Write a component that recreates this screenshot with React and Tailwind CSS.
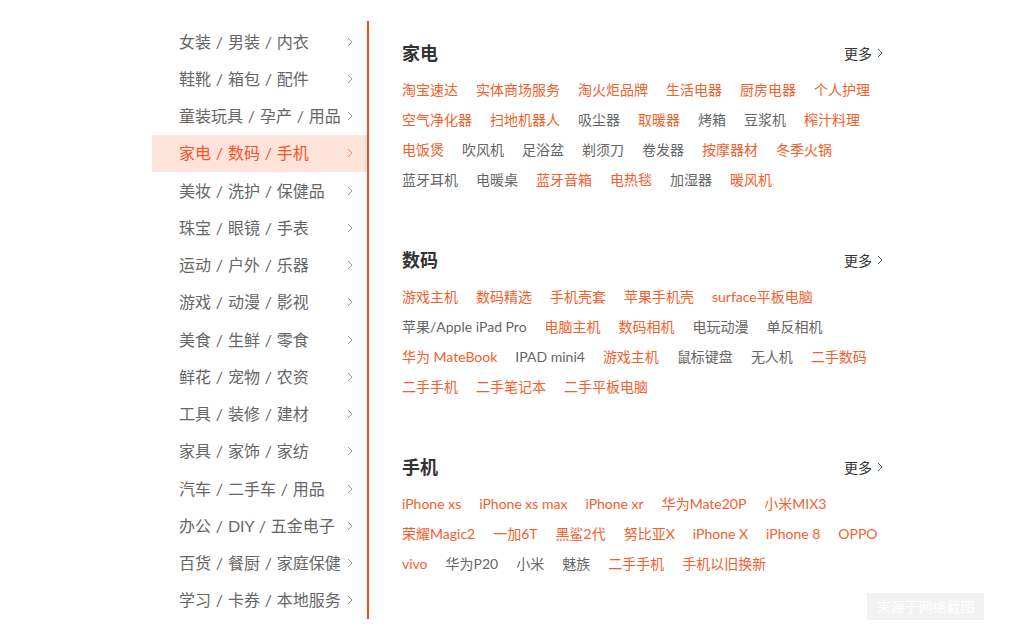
import React from "react";

const O = "o";
const G = "g";

const menu = [
  "女装 / 男装 / 内衣",
  "鞋靴 / 箱包 / 配件",
  "童装玩具 / 孕产 / 用品",
  "家电 / 数码 / 手机",
  "美妆 / 洗护 / 保健品",
  "珠宝 / 眼镜 / 手表",
  "运动 / 户外 / 乐器",
  "游戏 / 动漫 / 影视",
  "美食 / 生鲜 / 零食",
  "鲜花 / 宠物 / 农资",
  "工具 / 装修 / 建材",
  "家具 / 家饰 / 家纺",
  "汽车 / 二手车 / 用品",
  "办公 / DIY / 五金电子",
  "百货 / 餐厨 / 家庭保健",
  "学习 / 卡券 / 本地服务",
];

const sections = [
  {
    title: "家电",
    rows: [
      [["淘宝速达", O], ["实体商场服务", O], ["淘火炬品牌", O], ["生活电器", O], ["厨房电器", O], ["个人护理", O]],
      [["空气净化器", O], ["扫地机器人", O], ["吸尘器", G], ["取暖器", O], ["烤箱", G], ["豆浆机", G], ["榨汁料理", O]],
      [["电饭煲", O], ["吹风机", G], ["足浴盆", G], ["剃须刀", G], ["卷发器", G], ["按摩器材", O], ["冬季火锅", O]],
      [["蓝牙耳机", G], ["电暖桌", G], ["蓝牙音箱", O], ["电热毯", O], ["加湿器", G], ["暖风机", O]],
    ],
  },
  {
    title: "数码",
    rows: [
      [["游戏主机", O], ["数码精选", O], ["手机壳套", O], ["苹果手机壳", O], ["surface平板电脑", O]],
      [["苹果/Apple iPad Pro", G], ["电脑主机", O], ["数码相机", O], ["电玩动漫", G], ["单反相机", G]],
      [["华为 MateBook", O], ["IPAD mini4", G], ["游戏主机", O], ["鼠标键盘", G], ["无人机", G], ["二手数码", O]],
      [["二手手机", O], ["二手笔记本", O], ["二手平板电脑", O]],
    ],
  },
  {
    title: "手机",
    rows: [
      [["iPhone xs", O], ["iPhone xs max", O], ["iPhone xr", O], ["华为Mate20P", O], ["小米MIX3", O]],
      [["荣耀Magic2", O], ["一加6T", O], ["黑鲨2代", O], ["努比亚X", O], ["iPhone X", O], ["iPhone 8", O], ["OPPO", O]],
      [["vivo", O], ["华为P20", G], ["小米", G], ["魅族", G], ["二手手机", O], ["手机以旧换新", O]],
    ],
  },
];

function Chevron({ className }) {
  return (
    <svg className={className} width="6" height="10" viewBox="0 0 6 10" fill="none">
      <polyline points="1,1 5,5 1,9" stroke="currentColor" strokeWidth="1" />
    </svg>
  );
}

export default function App() {
  return (
    <div
      className="relative w-[1024px] h-[639px] bg-white overflow-hidden"
      style={{ fontFamily: 'Lato, "Noto Sans CJK SC", "Noto Sans", sans-serif' }}
    >
      <div className="flex ml-[152px] pt-[21px]">
        <div className="w-[215px] pt-[2px] border-r-2 border-[#ec4f1c] box-content">
          {menu.map((m, i) => {
            const active = i === 3;
            return (
              <div
                key={i}
                className={
                  "h-[37.25px] flex items-center pl-[27px] pr-[14px] text-[16px] justify-between [word-spacing:0.75px] " +
                  (active ? "bg-[#fde3da] text-[#f0582a]" : "text-[#666666]")
                }
              >
                <span className="whitespace-nowrap">{m}</span>
                <Chevron className={active ? "text-[#f08a68]" : "text-[#999999]"} />
              </div>
            );
          })}
        </div>
        <div className="w-[547px] pl-[33px] pr-[33px] pt-[20px]">
          {sections.map((s, si) => (
            <div key={si} className={si > 0 ? "mt-[54px]" : ""}>
              <div className="h-[24px] flex items-center justify-between mb-[9px]">
                <span className="text-[18px] font-bold text-[#333333]">{s.title}</span>
                <span className="flex items-center gap-[5px] text-[14px] text-[#333333]">
                  更多
                  <Chevron className="text-[#555555]" />
                </span>
              </div>
              {s.rows.map((r, ri) => (
                <div key={ri} className="h-[30px] flex items-center text-[14px] whitespace-nowrap">
                  {r.map(([t, c], ti) => (
                    <span
                      key={ti}
                      className={"mr-[18px] " + (c === O ? "text-[#f2602d]" : "text-[#666666]")}
                    >
                      {t}
                    </span>
                  ))}
                </div>
              ))}
            </div>
          ))}
        </div>
      </div>
      <div className="absolute left-[867px] top-[593px] w-[117px] h-[27px] bg-[#f2f2f2] flex items-center justify-center text-[14px] text-white">
        来源于网络截图
      </div>
    </div>
  );
}
